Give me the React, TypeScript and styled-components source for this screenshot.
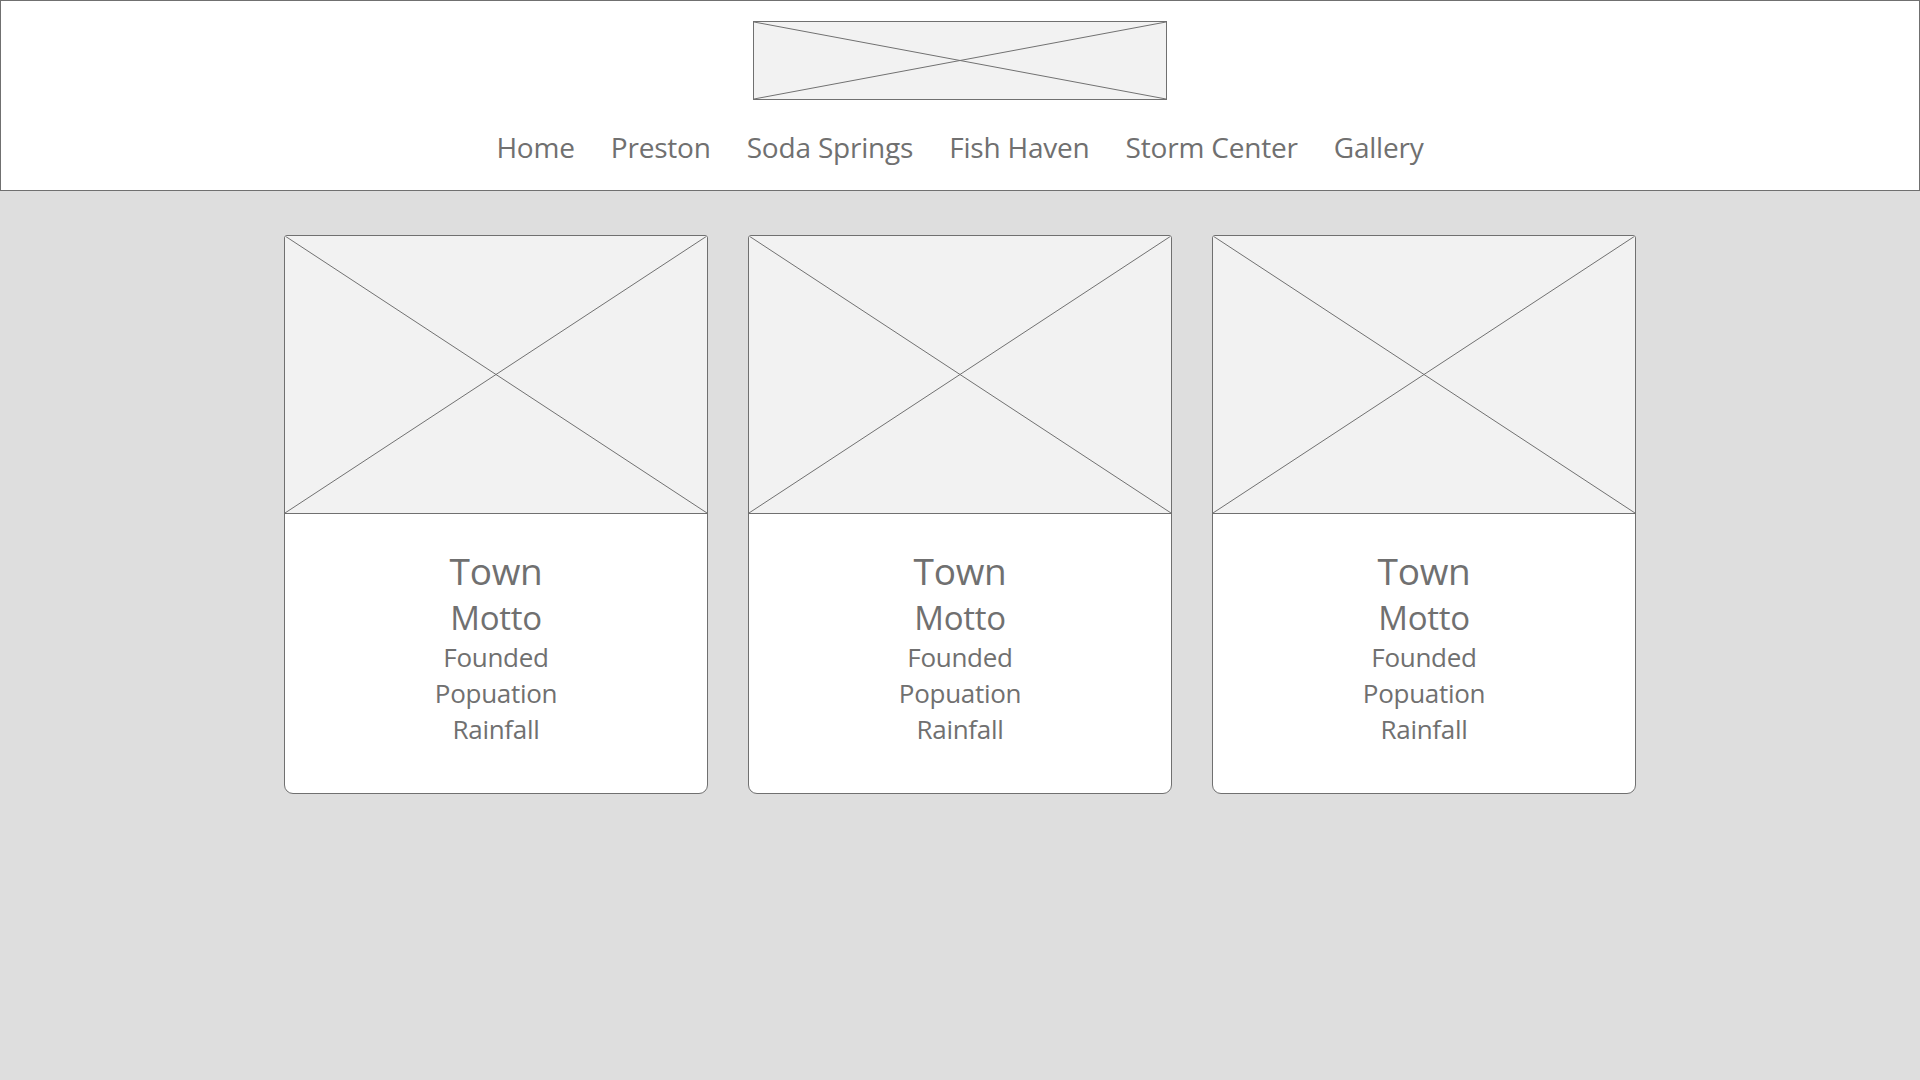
import React from "react";
import styled, { createGlobalStyle } from "styled-components";

const GlobalStyle = createGlobalStyle`
  html, body { margin: 0; padding: 0; }
  body {
    background: #dedede;
    font-family: "Open Sans", "Noto Sans", sans-serif;
    color: #707070;
    width: 1920px;
    height: 1080px;
    overflow: hidden;
  }
`;

const Header = styled.header`
  box-sizing: border-box;
  height: 191px;
  background: #ffffff;
  border: 1px solid #707070;
  display: flex;
  flex-direction: column;
  align-items: center;
`;

const PlaceholderBox = styled.div<{ $w: string; $h: number }>`
  box-sizing: border-box;
  position: relative;
  width: ${(p) => p.$w};
  height: ${(p) => p.$h}px;
  background: #f2f2f2;
  flex-shrink: 0;
`;

const LogoWrap = styled.div`
  margin-top: 20px;
  border: 1px solid #707070;
  display: flex;
`;

const CrossSvg = styled.svg`
  display: block;
  width: 100%;
  height: 100%;
`;

const Nav = styled.nav`
  margin-top: 28px;
  display: flex;
  gap: 36px;
`;

const NavLink = styled.a`
  font-size: 28px;
  line-height: 38px;
  color: #707070;
  text-decoration: none;
  letter-spacing: -0.2px;
`;

const Main = styled.main`
  padding-top: 44px;
  display: flex;
  justify-content: center;
  gap: 40px;
`;

const Card = styled.section`
  box-sizing: border-box;
  width: 424px;
  height: 559px;
  background: #ffffff;
  border: 1px solid #707070;
  border-radius: 3px 3px 9px 9px;
  overflow: hidden;
  display: flex;
  flex-direction: column;
`;

const CardImage = styled.div`
  border-bottom: 1px solid #707070;
  display: flex;
`;

const CardBody = styled.div`
  padding-top: 31px;
  display: flex;
  flex-direction: column;
  align-items: center;
  text-align: center;
`;

const Line = styled.div<{ $size: number; $lh: number }>`
  font-size: ${(p) => p.$size}px;
  line-height: ${(p) => p.$lh}px;
  color: #707070;
  letter-spacing: -0.3px;
`;

const Cross: React.FC = () => (
  <CrossSvg viewBox="0 0 100 100" preserveAspectRatio="none">
    <line x1="0" y1="0" x2="100" y2="100" stroke="#707070" strokeWidth="1" vectorEffect="non-scaling-stroke" />
    <line x1="100" y1="0" x2="0" y2="100" stroke="#707070" strokeWidth="1" vectorEffect="non-scaling-stroke" />
  </CrossSvg>
);

const navItems = ["Home", "Preston", "Soda Springs", "Fish Haven", "Storm Center", "Gallery"];

const TownCard: React.FC = () => (
  <Card>
    <CardImage>
      <PlaceholderBox $w="100%" $h={277}>
        <Cross />
      </PlaceholderBox>
    </CardImage>
    <CardBody>
      <Line $size={37} $lh={52}>Town</Line>
      <Line $size={33} $lh={42}>Motto</Line>
      <Line $size={26} $lh={36}>Founded</Line>
      <Line $size={26} $lh={36}>Popuation</Line>
      <Line $size={26} $lh={36}>Rainfall</Line>
    </CardBody>
  </Card>
);

export default function App() {
  return (
    <>
      <GlobalStyle />
      <Header>
        <LogoWrap>
          <PlaceholderBox $w="412px" $h={77}>
            <Cross />
          </PlaceholderBox>
        </LogoWrap>
        <Nav>
          {navItems.map((item) => (
            <NavLink key={item} href="#">
              {item}
            </NavLink>
          ))}
        </Nav>
      </Header>
      <Main>
        <TownCard />
        <TownCard />
        <TownCard />
      </Main>
    </>
  );
}
